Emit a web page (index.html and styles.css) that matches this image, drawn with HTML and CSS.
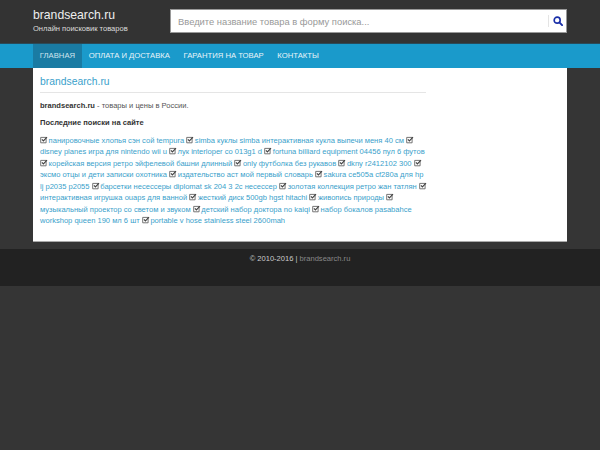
FILE: index.html
```html
<!DOCTYPE html>
<html>
<head>
    <meta charset="UTF-8">
    <meta name="viewport" content="width=device-width, initial-scale=1.0">
    <title>brandsearch.ru</title>
    <link rel="stylesheet" href="styles.css">
</head>
<body>
<svg class="defs" width="0" height="0">
    <symbol id="check" viewBox="0 0 8 8">
        <path d="M.7 1.4h5.4v5.4H.7z" fill="#fff" stroke="#666" stroke-width=".9"/>
        <path d="M1.9 3.3l1.5 1.5L7 1.2" fill="none" stroke="#444" stroke-width="1.2"/>
    </symbol>
</svg>

<!-- Header -->
<div class="header">
    <div class="brand">
        <a class="brand-name" href="#">brandsearch.ru</a>
        <div class="brand-sub">Онлайн поисковик товаров</div>
    </div>
    <div class="search">
        <div class="search-text">Введите название товара в форму поиска...</div>
        <div class="search-btn">
            <svg width="10" height="10" viewBox="0 0 11 11">
                <circle cx="4.6" cy="4.6" r="3.3" fill="none" stroke="#1a2fa8" stroke-width="1.8"/>
                <path d="M7 7l3 3" stroke="#1a2fa8" stroke-width="2.1" stroke-linecap="round"/>
            </svg>
        </div>
    </div>
</div>

<!-- Menu -->
<div class="nav">
    <div class="nav-inner">
        <a class="nav-item active" href="#">ГЛАВНАЯ</a>
        <a class="nav-item" href="#">ОПЛАТА И ДОСТАВКА</a>
        <a class="nav-item" href="#">ГАРАНТИЯ НА ТОВАР</a>
        <a class="nav-item" href="#">КОНТАКТЫ</a>
    </div>
</div>

<!-- Main content -->
<div class="content">
    <div class="column">
        <h1 class="title">brandsearch.ru</h1>
        <p class="intro"><b>brandsearch.ru</b> - товары и цены в России.</p>
        <p class="recent-title">Последние поиски на сайте</p>
        <div class="recent">
            <svg class="check"><use href="#check"/></svg> <a href="#">панировочные хлопья сэн сой tempura</a>
            <svg class="check"><use href="#check"/></svg> <a href="#">simba куклы simba интерактивная кукла выпечи меня 40 см</a>
            <svg class="check"><use href="#check"/></svg> <a href="#">disney planes игра для nintendo wii u</a>
            <svg class="check"><use href="#check"/></svg> <a href="#">лук interloper co 013g1 d</a>
            <svg class="check"><use href="#check"/></svg> <a href="#">fortuna billiard equipment 04456 пул 6 футов</a>
            <svg class="check"><use href="#check"/></svg> <a href="#">корейская версия ретро эйфелевой башни длинный</a>
            <svg class="check"><use href="#check"/></svg> <a href="#">only футболка без рукавов</a>
            <svg class="check"><use href="#check"/></svg> <a href="#">dkny r2412102 300</a>
            <svg class="check"><use href="#check"/></svg> <a href="#">эксмо отцы и дети записки охотника</a>
            <svg class="check"><use href="#check"/></svg> <a href="#">издательство аст мой первый словарь</a>
            <svg class="check"><use href="#check"/></svg> <a href="#">sakura ce505a cf280a для hp lj p2035 p2055</a>
            <svg class="check"><use href="#check"/></svg> <a href="#">барсетки несессеры diplomat sk 204 3 2c несессер</a>
            <svg class="check"><use href="#check"/></svg> <a href="#">золотая коллекция ретро жан татлян</a>
            <svg class="check"><use href="#check"/></svg> <a href="#">интерактивная игрушка ouaps для ванной</a>
            <svg class="check"><use href="#check"/></svg> <a href="#">жесткий диск 500gb hgst hitachi</a>
            <svg class="check"><use href="#check"/></svg> <a href="#">живопись природы</a>
            <svg class="check"><use href="#check"/></svg> <a href="#">музыкальный проектор со светом и звуком</a>
            <svg class="check"><use href="#check"/></svg> <a href="#">детский набор доктора no kaiqi</a>
            <svg class="check"><use href="#check"/></svg> <a href="#">набор бокалов pasabahce workshop queen 190 мл 6 шт</a>
            <svg class="check"><use href="#check"/></svg> <a href="#">portable v hose stainless steel 2600mah</a>
        </div>
    </div>
</div>

<!-- Footer -->
<div class="footer">© 2010-2016 | <a href="#">brandsearch.ru</a></div>
</body>
</html>
```

FILE: styles.css
```css
html, body {
    height: 100%;
    margin: 0;
    overflow: hidden;
}

body {
    background-color: #353535;
    font-family: "Liberation Sans", Arial, sans-serif;
    font-size: 7.55px;
    color: #555;
}

a {
    text-decoration: none;
}

.defs {
    display: block;
}

/* Header */
.header {
    display: flex;
    height: 43px;
    padding-left: 33px;
    background-color: #333;
    border-bottom: 1px solid #2a4a58;
}

.brand {
    width: 137px;
    padding-top: 8px;
}

.brand-name {
    display: block;
    color: #eee;
    font-size: 12.2px;
    line-height: 15px;
}

.brand-sub {
    color: #ddd;
    line-height: 11px;
}

.search {
    display: flex;
    align-items: center;
    width: 397px;
    height: 24px;
    margin-top: 9px;
    background-color: #fff;
    border: 1px solid #999;
    box-sizing: border-box;
}

.search-text {
    flex: 1;
    padding-left: 7px;
    color: #999;
    font-size: 9.4px;
}

.search-btn {
    display: flex;
    align-items: center;
    justify-content: center;
    width: 17px;
    height: 12px;
    border-left: 1px solid #e4e4e4;
}

/* Menu */
.nav {
    height: 24px;
    background-color: #1a9acb;
}

.nav-inner {
    display: flex;
    padding-left: 33px;
}

.nav-item {
    padding: 0 6.8px;
    color: #e8f4f9;
    font-size: 7.7px;
    line-height: 24px;
}

.nav-item.active {
    background-color: #1a7ba3;
    color: #cfe4ee;
}

/* Main content */
.content {
    width: 520px;
    height: 173px;
    margin-left: 33px;
    padding: 0 7px;
    background-color: #fff;
    border-bottom: 1px solid #aaa;
}

.column {
    width: 386px;
}

.title {
    margin: 0;
    padding: 8px 0 4px;
    border-bottom: 1px solid #e5e5e5;
    color: #3a9fcb;
    font-size: 10.35px;
    font-weight: normal;
    line-height: 12px;
}

.intro {
    margin: 0;
    padding-top: 7px;
    line-height: 11.4px;
}

.intro b {
    color: #333;
}

.recent-title {
    margin: 0;
    padding-top: 6px;
    color: #333;
    font-weight: bold;
    line-height: 11.4px;
}

.recent {
    margin-top: 6px;
    line-height: 11.45px;
}

.recent a {
    color: #3a9fcb;
}

.check {
    width: 8px;
    height: 8px;
    margin-right: -1.5px;
    vertical-align: -1px;
}

/* Footer */
.footer {
    height: 37px;
    margin-top: 7px;
    padding-top: 4px;
    box-sizing: border-box;
    background-color: #222;
    color: #ccc;
    line-height: 11px;
    text-align: center;
}

.footer a {
    color: #888;
}
```
